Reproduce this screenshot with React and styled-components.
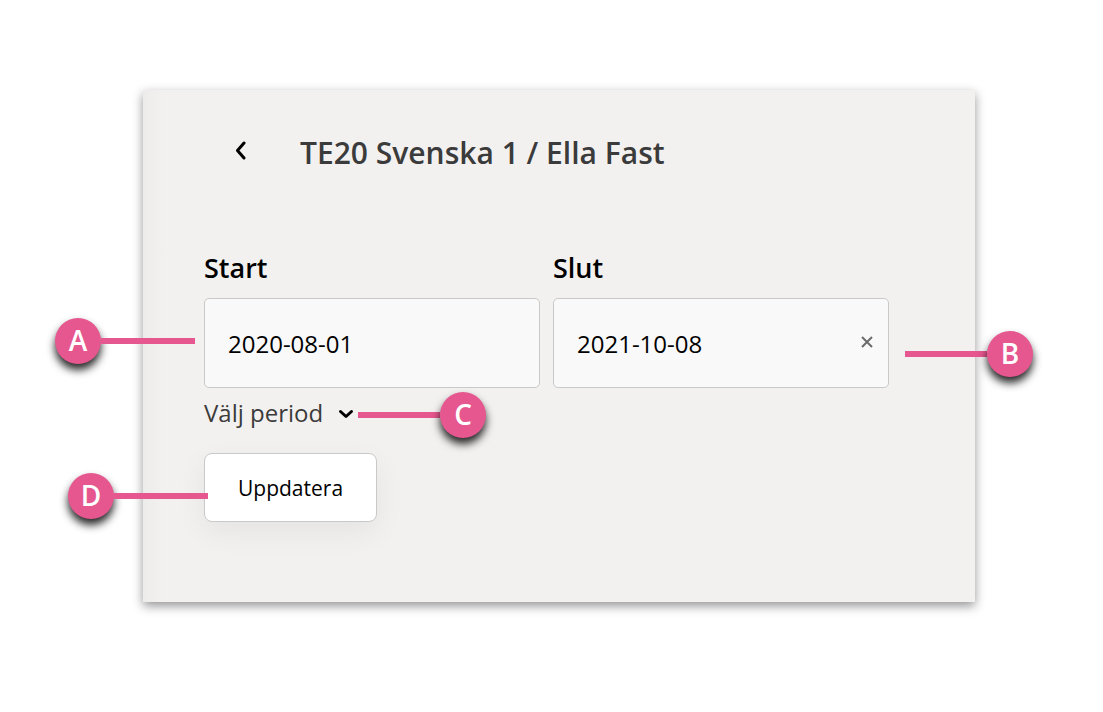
import React, { useState } from 'react';
import styled, { createGlobalStyle } from 'styled-components';

const App = () => {
  const [start, setStart] = useState('2020-08-01');
  const [end, setEnd] = useState('2021-10-08');

  return (
    <>
      <GlobalStyle />
      <Page>
        <Card>
          <Header>
            <BackButton aria-label="Tillbaka">
              <svg width="12" height="20" viewBox="0 0 12 20">
                <path d="M9 3 2.500 10.500 9 18" />
              </svg>
            </BackButton>
            <Title>TE20 Svenska 1 / Ella Fast</Title>
          </Header>

          <Fields>
            <Field>
              <Label htmlFor="start">Start</Label>
              <InputBox>
                <DateInput id="start" value={start} onChange={(e) => setStart(e.target.value)} />
                <Callout $side="left" $gap={10} $top={19} $line={94}>
                  A
                </Callout>
              </InputBox>
            </Field>
            <Field>
              <Label htmlFor="end">Slut</Label>
              <InputBox>
                <DateInput id="end" value={end} onChange={(e) => setEnd(e.target.value)} />
                <ClearButton aria-label="Rensa" onClick={() => setEnd('')}>
                  <svg width="12" height="12" viewBox="0 0 12 12">
                    <path d="M1 1l10 10M11 1 1 11" />
                  </svg>
                </ClearButton>
                <Callout $side="right" $gap={17} $top={32} $line={82}>
                  B
                </Callout>
              </InputBox>
            </Field>
          </Fields>

          <PeriodButton>
            Välj period
            <svg width="16" height="10" viewBox="0 0 16 10">
              <path d="M2.500 2.500 8 7.500l5.500-5" />
            </svg>
            <Callout $side="right" $gap={4} $top={-4} $line={82}>
              C
            </Callout>
          </PeriodButton>

          <UpdateRow>
            <UpdateButton>Uppdatera</UpdateButton>
            <Callout $side="left" $gap={-4} $top={20} $line={94}>
              D
            </Callout>
          </UpdateRow>
        </Card>
      </Page>
    </>
  );
};

const Callout = ({ children, $side, $gap, $top, $line }) => (
  <CalloutBox $side={$side} $gap={$gap} $top={$top}>
    <Badge>{children}</Badge>
    <Line $length={$line} />
  </CalloutBox>
);

export default App;

const GlobalStyle = createGlobalStyle`
  * {
    box-sizing: border-box;
  }

  body {
    margin: 0;
    background: #fff;
    font-family: 'Open Sans', 'Noto Sans', sans-serif;
  }

  button,
  input {
    font-family: inherit;
  }
`;

const Page = styled.main`
  padding: 90px 128px 110px 143px;
`;

const Card = styled.section`
  padding: 41px 86px 80px 61px;
  background: linear-gradient(to right, #ececeb, #f3f1f0 20px);
  box-shadow: 0 4px 10px rgba(0, 0, 0, 0.42);
`;

const Header = styled.header`
  display: flex;
  align-items: center;
  gap: 48px;
  height: 44px;
  padding-left: 25px;
`;

const BackButton = styled.button`
  display: flex;
  justify-content: center;
  width: 23px;
  padding: 0 0 6px;
  border: 0;
  background: none;
  cursor: pointer;

  svg {
    fill: none;
    stroke: #000;
    stroke-width: 3;
    stroke-linecap: round;
    stroke-linejoin: round;
  }
`;

const Title = styled.h1`
  margin: 0;
  color: #3b3b3b;
  font-size: 30px;
  font-weight: 600;
  line-height: 44px;
`;

const Fields = styled.div`
  display: grid;
  grid-template-columns: 1fr 1fr;
  gap: 13px;
  margin-top: 75px;
`;

const Field = styled.div`
  display: flex;
  flex-direction: column;
  gap: 12px;
  min-width: 0;
`;

const Label = styled.label`
  color: #000;
  font-size: 27px;
  font-weight: 600;
  line-height: 36px;
`;

const InputBox = styled.div`
  position: relative;
  display: flex;
  align-items: center;
  height: 90px;
  border: 1px solid #c9c9c9;
  border-radius: 5px;
  background: #f9f9f9;
`;

const DateInput = styled.input`
  flex: 1;
  min-width: 0;
  height: 100%;
  padding: 0 0 0 23px;
  border: 0;
  outline: none;
  background: none;
  color: #000;
  font-size: 24px;
`;

const ClearButton = styled.button`
  display: flex;
  padding: 0 15px 2px;
  border: 0;
  background: none;
  cursor: pointer;

  svg {
    fill: none;
    stroke: #6b6b6b;
    stroke-width: 2;
  }
`;

const PeriodButton = styled.button`
  position: relative;
  display: flex;
  align-items: center;
  gap: 15px;
  margin-top: 8px;
  padding: 0;
  border: 0;
  background: none;
  color: #3b3b3b;
  font-size: 24px;
  line-height: 34px;
  cursor: pointer;

  svg {
    margin-top: 2px;
    fill: none;
    stroke: #000;
    stroke-width: 3;
    stroke-linecap: round;
    stroke-linejoin: round;
  }
`;

const UpdateRow = styled.div`
  position: relative;
  display: flex;
  margin-top: 23px;
`;

const UpdateButton = styled.button`
  height: 69px;
  padding: 0 33px;
  border: 1px solid #c9c9c9;
  border-radius: 8px;
  background: #fff;
  box-shadow: 0 10px 30px rgba(0, 0, 0, 0.06);
  color: #000;
  font-size: 21px;
  cursor: pointer;
`;

const CalloutBox = styled.span`
  position: absolute;
  top: ${({ $top }) => $top}px;
  ${({ $side, $gap }) => ($side === 'left' ? `right: calc(100% + ${$gap}px);` : `left: calc(100% + ${$gap}px);`)}
  display: flex;
  flex-direction: ${({ $side }) => ($side === 'left' ? 'row' : 'row-reverse')};
  align-items: center;
`;

const Badge = styled.span`
  display: flex;
  align-items: center;
  justify-content: center;
  width: 46px;
  height: 46px;
  padding-bottom: 2px;
  border-radius: 50%;
  background: #e6568f;
  box-shadow: 0 6px 9px rgba(0, 0, 0, 0.85);
  color: #fff;
  font-size: 28px;
  font-weight: 600;
  line-height: 44px;
`;

const Line = styled.span`
  width: ${({ $length }) => $length}px;
  height: 6px;
  background: #e6568f;
`;
